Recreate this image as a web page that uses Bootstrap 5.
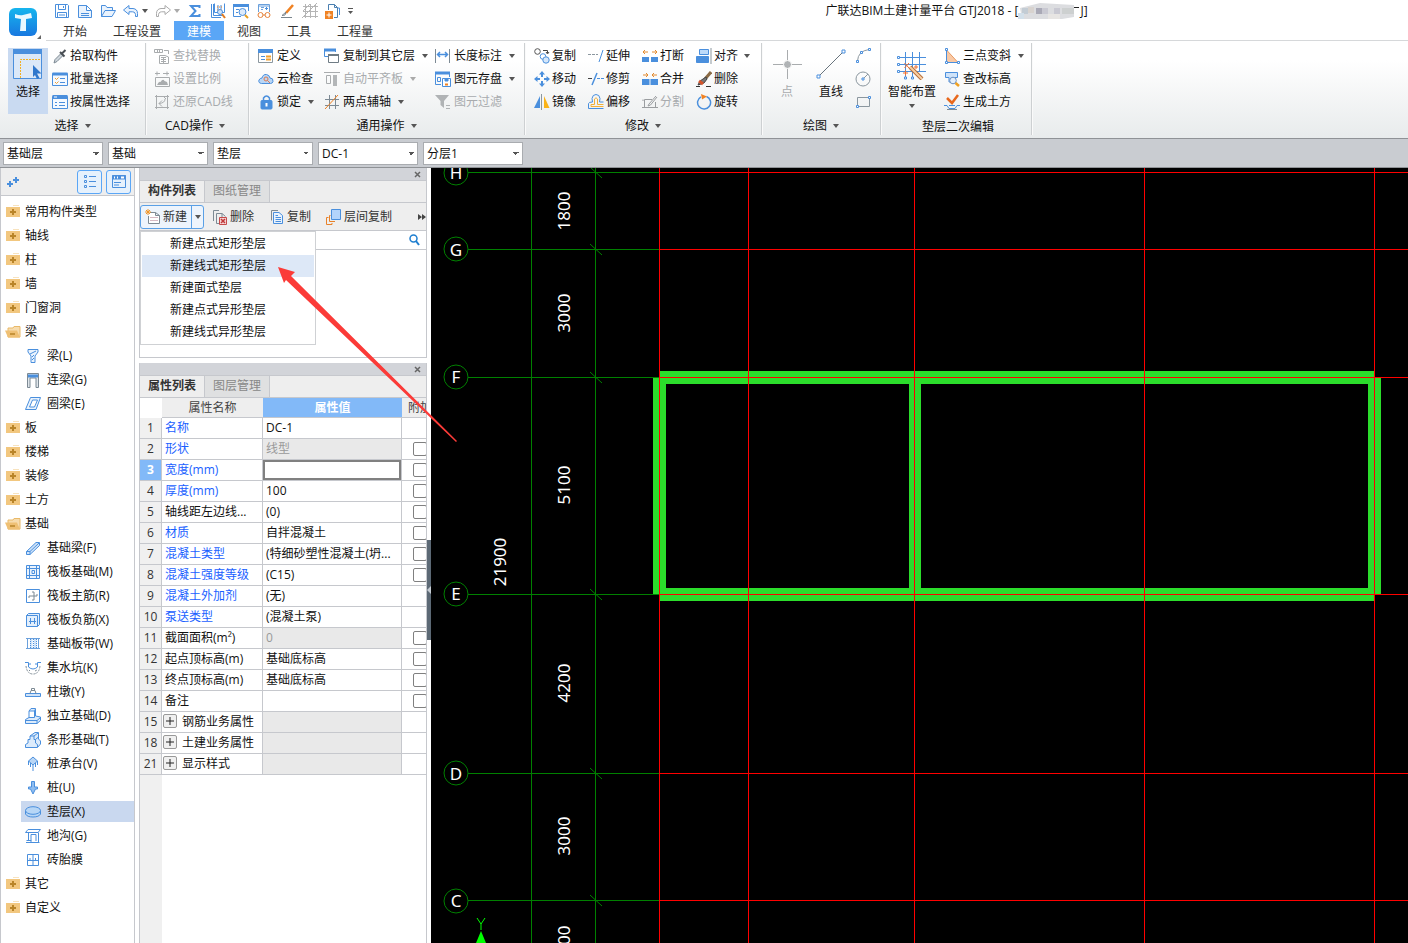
<!DOCTYPE html>
<html lang="zh-CN">
<head>
<meta charset="utf-8">
<meta name="viewport" content="width=device-width, initial-scale=1">
<title>广联达BIM土建计量平台 GTJ2018</title>
<link href="https://cdn.jsdelivr.net/npm/bootstrap@5.3.0/dist/css/bootstrap.min.css" rel="stylesheet">
<style>
:root{--bl:#4a8fdd;--gr:#8b979f;--or:#f08223;--ln:#c6c8cd}
body{font:12px/16px "Open Sans","Noto Sans CJK SC",sans-serif;color:#111;background:#fff;overflow:hidden}
.btn{--bs-btn-font-size:12px;--bs-btn-line-height:16px;--bs-btn-padding-x:0;--bs-btn-padding-y:0;--bs-btn-border-width:0;--bs-btn-border-radius:0;--bs-btn-color:#111;--bs-btn-disabled-color:#a8abae;--bs-btn-disabled-opacity:1;white-space:nowrap}
.btn svg,.ic{display:block;flex:none}
.ic{width:16px;height:16px}
.ic-lg{width:32px;height:32px}
.caret{width:0;height:0;flex:none;border:3px solid transparent;border-top:4px solid #555;border-bottom:0}
.caret.pale{border-top-color:#aaa}
.apps{width:46px;border-right:1px solid #ddd}
.qat{height:21px;gap:7px;padding-left:8px}
.qat .btn.d-flex{gap:3px}
.app-title{padding-left:152px}
.menu-tabs{--bs-nav-link-font-size:12px;padding-left:4px;border-bottom:1px solid #d6d8da}
.menu-tabs .nav-link{padding:3px 13px 0;color:#333;border-radius:0}
.menu-tabs .nav-link.active{background:#5aa6f6;color:#fff}
.ribbon{background:linear-gradient(#fff 20%,#e8ebec);border-bottom:1px solid #8f9296;padding:2px 0 3px}
.rgroup{border-right:1px solid #cdd0d2;box-shadow:1px 0 #fafafa;height:92px}
.rgroup>.cmds{height:73px;padding-top:1px}
.rlabel{height:19px;gap:6px}
.pad-9{padding-left:9px}
.cmds .grid3{display:grid;grid-auto-flow:column;grid-template-rows:repeat(3,23px);align-items:center;justify-items:start}
.cmd{display:flex;align-items:center;gap:2px}
.cmd .caret,.w3 .caret{margin-left:4px}
.w3 .cmd{gap:3px}
.cols-3{grid-template-columns:66px 111px 88px}
.cols-4{grid-template-columns:repeat(4,54px)}
.big{display:flex;flex-direction:column;align-items:center}
.big.sel{background:#c9daf1;width:40px;height:66px}
.filterbar{background:#c9ccd1;border-bottom:1px solid #8f9296;padding:3px 3px 2px;gap:5px}
.filterbar .form-select{width:100px;height:23px;border:1px solid #a9acb0;border-radius:0;padding:0 16px 0 3px;font-size:12px;line-height:16px;color:#111;background-color:#fff;background-image:linear-gradient(45deg,transparent 50%,#555 50%),linear-gradient(-45deg,transparent 50%,#555 50%);background-size:3px 3px,3px 3px;background-position:right 6px center,right 3px center}
.workspace{min-height:0}
.sidebar{width:135px;border:1px solid var(--ln);border-width:0 1px}
.sidehead{height:28px;background:#eee;border-bottom:1px solid var(--ln);padding:0 3px 0 5px}
.sidehead .tog{width:25px;height:24px;border:1px solid #5aa6f6;border-radius:3px;background:#e6f1fc;display:flex;align-items:center;justify-content:center}
.tree{padding-top:4px;margin:0;list-style:none}
.tree a{display:flex;align-items:center;height:24px;gap:4px;padding-left:4px;color:#111;text-decoration:none}
.tree .kid a{margin-left:20px;gap:6px}
.tree .cur a{background:#c9d8ef;height:21px;margin-top:1px;margin-bottom:2px}
.docks{width:288px;margin-left:4px}
.dock{border:1px solid var(--ln);border-width:0 1px 1px}
.dockbar{height:12px;background:#d2d4d9;padding-right:5px}
.dock-tabs{background:#eee;border:1px solid var(--ln);border-width:1px 0;height:23px;--bs-nav-link-font-size:12px}
.dock-tabs .nav-link{padding:2px 8px;color:#888;background:#dfe0e1;border-right:1px solid var(--ln);border-radius:0}
.dock-tabs .nav-link.active{font-weight:bold;color:#333;background:#eee}
.tools{height:27px;background:#eee;gap:15px}
.tools .btn{--bs-btn-color:#333}
.newbtn{border:1px solid #5aa0e6;border-radius:3px;background:#edf4fc;height:24px;width:64px;margin-right:-7px}
.newbtn .drop{border-left:1px solid #5aa0e6;width:12px;display:flex;align-items:center;justify-content:center}
.search{height:20px;border:1px solid var(--ln);border-width:1px 0;padding-right:6px}
.search input{border:0;outline:0;min-width:0}
.newmenu{--bs-dropdown-font-size:12px;position:absolute;top:28px;left:0;width:176px;padding:1px;border:1px solid #cfd1d4;border-radius:0}
.newmenu .dropdown-item{padding:2px 0 2px 28px;height:22px;line-height:18px;color:#111}
.newmenu .dropdown-item.on{background:#dde8f7}
.blank{height:107px}
.props{margin-top:5px;border-bottom:0}
.sheet{background:linear-gradient(90deg,#f0f0f0 22px,#fff 22px);overflow:hidden}
.sheet table{table-layout:fixed;width:298px;border-collapse:separate;border-spacing:0}
.sheet th,.sheet td{height:21px;line-height:16px;padding:2px 3px;border:solid var(--ln);border-width:0 1px 1px 0;font-weight:normal;white-space:nowrap;overflow:hidden;background:#fff}
.sheet thead th{height:20px;padding:2px 0 1px;background:#eee;text-align:center;color:#444;border-right:0}
.sheet thead th.v{background:#82b9f8;color:#fff;font-weight:bold}
.sheet thead th.k{background:#fff;border-bottom-color:#fff}
.sheet tbody th{background:#f0f0f0;text-align:center;padding:2px 0;color:#333}
.sheet tbody th.on{background:#82b9f8;color:#fff;font-weight:bold}
.sheet .bl{color:#1a5fff}
.sheet td.ro{background:#e9e9e9;color:#999}
.sheet td.c{text-align:center;padding:3px 0}
.sheet td.ed{padding:0}
.sheet td.ed input{display:block;width:100%;height:20px;border:2px solid #808080;outline:0}
.sheet input[type=checkbox]{appearance:none;width:14px;height:14px;border:1px solid #808080;border-radius:2px;margin:0 auto;display:block;background:#fff}
.plus{width:14px;height:14px;border:1px solid #999;border-radius:2px;background:#f0f0f0;padding:0;display:inline-flex;align-items:center;justify-content:center;margin:0 5px 0 -2px;vertical-align:1px}
.split{width:4px;background:#fff}
.split button{margin-top:372px;width:4px;height:100px;background:#5c6975;border:0;padding:0;display:block}
.cad{background:#000;overflow:hidden}
.cad text{font-family:"Noto Sans",sans-serif;font-size:17px;fill:#fff;text-anchor:middle}
.pointer{position:absolute;left:139px;top:98px;pointer-events:none;z-index:1100}
symbol,.art{fill:none;stroke:var(--bl);stroke-width:1}
</style>
</head>
<body class="min-vh-100 d-flex flex-column">

<svg width="0" height="0" class="position-absolute">
<symbol id="save" viewBox="0 0 16 16"><path d="M1.500 1.500H13.500L14.500 2.500V14.500H1.500ZM4.500 1.500V6.500H11.500V1.500M3.500 14.500V9.500H12.500V14.500M9.500 3V5M5 12H11"/></symbol>
<symbol id="doc" viewBox="0 0 16 16"><path d="M1.500 2.500H9.500L14.500 7.500V14.500H1.500ZM9.500 2.500V7.500H14.500M4 10.500H12M4 12.500H12" fill="#eaf3fd"/></symbol>
<symbol id="open" viewBox="0 0 16 16"><path d="M1.500 13.500V2.500H5.500L7 4.500H12.500V7.500M1.500 13.500L5 7.500H15.500L12 13.500Z" fill="#eaf3fd"/></symbol>
<symbol id="undo" viewBox="0 0 16 16"><path d="M.5 7L6 2.500V5.500H10Q14.500 6 14.500 10.500V13.500H12.500Q13 9 9.500 8.800H6V11.500Z" fill="#eaf3fd"/></symbol>
<symbol id="redo" viewBox="0 0 16 16"><path d="M15.500 7L10 2.500V5.500H6Q1.500 6 1.500 10.500V13.500H3.500Q3 9 6.500 8.800H10V11.500Z" stroke="#aaa"/></symbol>
<symbol id="sum" viewBox="0 0 16 16"><path d="M12.500 5V3H4L8.500 8L4 13H12.500V11" stroke-width="2"/></symbol>
<symbol id="meas" viewBox="0 0 16 16"><path d="M1.500 1V14.500H11M3.500 1V12.500H14M4.500 .5V9.500H14.500V.5M8 2V7M11 2V6"/><path d="M7 4H13M7 7H12" stroke="#f08223" stroke-dasharray="1 1"/><circle cx="10" cy="9" r="2.500" fill="#cfe4fb"/><path d="M12 11L15 15" stroke="#e07a20" stroke-width="2"/></symbol>
<symbol id="find" viewBox="0 0 16 16"><path d="M.5 2.500H15.500M.5 13.500V2.500M.5 13.500H8M15.500 2.500V8M3 6.500H6M3 9.500H5"/><path d="M0 2.500H16" stroke-width="3"/><circle cx="9.500" cy="9" r="3.500" fill="#dcebfb"/><path d="M12 12L15 15" stroke="#e8a020" stroke-width="2"/></symbol>
<symbol id="view" viewBox="0 0 16 16"><path d="M2.500 9V1.500H13.500V9M5 4.500H8M5 6.500H7M2 3H14" stroke="#6aa0dc"/><path d="M9 5.500H12M10.500 4V7" stroke="#4a8fdd"/><circle cx="4.500" cy="12" r="2.500" stroke="#e5823a"/><circle cx="11.500" cy="12" r="2.500" stroke="#e5823a"/><path d="M7 12H9" stroke="#e5823a"/></symbol>
<symbol id="pen" viewBox="0 0 16 16"><path d="M14 2L7 10" stroke="#f08223" stroke-width="2.500"/><path d="M7 9L3 12.500L6 12ZM2 14.500H13" stroke="#7a858d"/></symbol>
<symbol id="mesh" viewBox="0 0 16 16"><path d="M3.500 1V15M8.500 1V15M13.500 1V15M1 3.500H16M1 8.500H16M1 13.500H16M0 15L15 0M1 8L8 1" stroke="#b5b5b5"/></symbol>
<symbol id="addc" viewBox="0 0 16 16"><path d="M3.500 7V1.500H9.500L12.500 4.500V14.500H9M9.500 1.500V4.500H12.500" stroke="#4a7fb0"/><path d="M13 5H14.500V12" stroke="#4a8fdd"/><rect x="0" y="8" width="8" height="8" fill="#f08223" stroke="none"/><path d="M1.500 12H6.500M4 9.500V14.500" stroke="#fff"/></symbol>
<symbol id="pick" viewBox="0 0 16 16"><path d="M2 15L3 11.500L9 5.500L11 7.500L5 13.500Z" stroke="#7d8a94" fill="#cfd6dc"/><path d="M8 4L12.500 8.500M10 5.500L13.500 2" stroke="#4a4f55" stroke-width="2"/></symbol>
<symbol id="batch" viewBox="0 0 16 16"><path d="M.5 2.500H15.500V14.500H.5Z" fill="#f4f9ff"/><path d="M.5 3H15.500" stroke-width="3"/><path d="M8 7.500H13M8 11.500H13"/><path d="M3 7L4.500 8.500L6.500 6.500M3 11L4.500 12.500L6.500 10.500" stroke="#f0a030"/></symbol>
<symbol id="prop" viewBox="0 0 16 16"><path d="M.5 2.500H15.500V14.500H.5Z" fill="#f4f9ff"/><path d="M.5 3H15.500" stroke-width="4"/><path d="M2 3H5" stroke="#fff"/><path d="M3 8.500H5M7 8.500H13M3 11.500H5M7 11.500H13"/></symbol>
<symbol id="rep" viewBox="0 0 16 16"><path d="M.5 1.500H8.500V4.500H.5ZM3.500 2V4M5.500 2V4M10 2.500H14.500V6M5.500 15.500V7.500H11L14.500 9V15.500ZM7 9.500H12M7 11.500H12M7 13.500H12M9.500 9V15" stroke="#a9acae"/></symbol>
<symbol id="scale" viewBox="0 0 16 16"><path d="M1 2.500H6M9 2.500H15M3 .5V4.500M13 .5V4.500M1.500 6.500H15.500V15.500H1.500Z" stroke="#a9acae"/><path d="M3 14Q5 10 6.500 11Q9 7 10.500 10L13 11L14 14Z" fill="#a9acae" stroke="none"/></symbol>
<symbol id="rest" viewBox="0 0 16 16"><path d="M1 2.500H15M2.500 1V15M13.500 1V15M1 13.500H15M11 5Q11 9 5 9.500M8 6.500L5 9.500L8 12.500M10 3L12 5" stroke="#a9acae"/></symbol>
<symbol id="def" viewBox="0 0 16 16"><path d="M.5 2V14.500H14.500V2" stroke="#8b979f" fill="#fff"/><path d="M0 3H15" stroke-width="4"/><path d="M3 8.500H7M3 11.500H7"/><path d="M8 8.500H13M8 11.500H13" stroke="#f0a030" stroke-width="2"/></symbol>
<symbol id="cloud" viewBox="0 0 16 16"><path d="M3.500 12.500Q0 12 1 9Q2 7 4 7Q5 3 8.500 3.500Q11.500 4 12 7Q15.500 7 15 10.500Q14.500 12.500 12.500 12.500Z" fill="#b9d6f5"/><circle cx="8" cy="8" r="2" stroke="#e07a50"/><path d="M9.500 9.500L12 12" stroke="#e07a50"/></symbol>
<symbol id="lock" viewBox="0 0 16 16"><path d="M5.500 7V4Q8.500 0 11.500 4V7" stroke-width="1.500"/><rect x="3" y="6.500" width="11" height="8.500" rx="1" fill="#4a8fdd"/><path d="M8.500 9V12.500" stroke="#fff" stroke-width="2"/></symbol>
<symbol id="cpf" viewBox="0 0 16 16"><path d="M4.500 8.500H.5V1.500H11.500V4"/><path d="M0 2H12" stroke-width="3"/><path d="M4.500 6.500H14.500V14.500H4.500Z" stroke="#6e7b84" fill="#fff"/><path d="M4 7H15" stroke="#6e7b84" stroke-width="2"/></symbol>
<symbol id="flat" viewBox="0 0 16 16"><path d="M0 1.500H16M2.500 4.500H6.500V12.500H2.500Z" stroke="#a9acae"/><rect x="9" y="4" width="4" height="11" fill="#b3b6b8" stroke="none"/></symbol>
<symbol id="axis" viewBox="0 0 16 16"><path d="M5.500 1V15M11.500 1V15M1 5.500H15M1 11.500H15" stroke="#7d8a94"/><path d="M1 15L14 1" stroke="#f08223"/></symbol>
<symbol id="len" viewBox="0 0 16 16"><path d="M.5 1V15M14.500 1V15" stroke="#7d8a94"/><path d="M3 6.500H13M5 4L2.500 6.500L5 9M10 4L12.500 6.500L10 9" stroke-width="1.500"/></symbol>
<symbol id="store" viewBox="0 0 16 16"><path d="M.5 13.500V1.500H14.500V6M.5 13.500H6M2.500 6.500H5.500V10.500H2.500Z"/><path d="M0 2H15" stroke-width="3"/><path d="M7.500 7.500H15.500V15.500H7.500Z" fill="#fff"/><path d="M10 8H13V10H10Z" fill="#4a8fdd"/><path d="M10 13.500H13" stroke="#f08223" stroke-width="2"/></symbol>
<symbol id="filt" viewBox="0 0 16 16"><path d="M0 1H14L9 7V14L5.500 11V7Z" fill="#b0b3b5" stroke="none"/><path d="M11 11.500H15M11 14.500H15" stroke="#b0b3b5"/></symbol>
<symbol id="copy" viewBox="0 0 16 16"><circle cx="3.500" cy="3.500" r="2.800" stroke="#555"/><path d="M9 2.500H13.500V5M12 4L13.500 6L15 4" stroke="#444"/><circle cx="9" cy="8.500" r="2.800"/><circle cx="12" cy="12" r="3.200" fill="#d5e7fa"/></symbol>
<symbol id="move" viewBox="0 0 16 16"><path d="M8 0L11 3.500H9V6H7V3.500H5ZM8 16L11 12.500H9V10H7V12.500H5ZM0 8L3.500 5V7H6V9H3.500V11ZM16 8L12.500 5V7H10V9H12.500V11Z" fill="#4a8fdd" stroke="none"/></symbol>
<symbol id="mirror" viewBox="0 0 16 16"><path d="M6 2V14H0Z" fill="#4a8fdd" stroke="none"/><path d="M10 2V14H15.500Z" fill="#fab319" stroke="none"/><path d="M7.500 0V16" stroke="#8b979f"/></symbol>
<symbol id="ext" viewBox="0 0 16 16"><path d="M0 6.500H10" stroke="#8b979f" stroke-dasharray="3 1"/><path d="M15 2L11 14"/></symbol>
<symbol id="trim" viewBox="0 0 16 16"><path d="M0 7.500H4" stroke="#444"/><path d="M9 7.500H16" stroke-dasharray="3 1"/><path d="M9 2L4 14" stroke-width="1.500"/></symbol>
<symbol id="offs" viewBox="0 0 16 16"><path d="M.5 14.500V9.500Q1 8 4.500 8L4 4.500Q4.500 .5 8 .5Q11.500 .5 12 4.500L11.500 8H15.500M15.500 14.500H.5"/><path d="M3 12.500V10.500H6.500V5Q8 2.500 9.500 5V10.500H15.500M3 12.500H15.500" stroke="#f2b13a"/></symbol>
<symbol id="brk" viewBox="0 0 16 16"><path d="M0 9H7V14H0ZM9 9H16V14H9Z" fill="#4a8fdd" stroke="none"/><path d="M1 4H6M10 4H15M3 2L1 4L3 6M13 2L15 4L13 6" stroke="#e38a2e"/></symbol>
<symbol id="join" viewBox="0 0 16 16"><path d="M0 8H7.500V14H0ZM8.500 8H16V14H8.500Z" fill="#4a8fdd" stroke="none"/><path d="M1 4H6M10 4H15M4 2L6 4L4 6M12 2L10 4L12 6" stroke="#e38a2e"/></symbol>
<symbol id="cut" viewBox="0 0 16 16"><path d="M10 5.500H2.500V13.500H13.500V8M1 7V5.500M0 13.500H4M12 13.500H16M7 10L14 2M7 10L6 12L8.500 11L15 3" stroke="#9a9da0"/></symbol>
<symbol id="alig" viewBox="0 0 16 16"><path d="M3.500 1.500H12.500V6.500H3.500Z" fill="#bcdafa"/><path d="M.5 8.500H12.500V14.500H.5Z" fill="#4a8fdd"/><path d="M15 0V16" stroke="#8b979f"/></symbol>
<symbol id="brush" viewBox="0 0 16 16"><path d="M15 1L9 8" stroke="#8a6a45" stroke-width="3"/><path d="M10 6L4 10L2 14L8 12L11 8Z" fill="#777" stroke="#444"/><path d="M3 10L7 13" stroke="#d4532a" stroke-width="3"/><path d="M0 15.500H4M10 15.500H15" stroke="#333"/></symbol>
<symbol id="rot" viewBox="0 0 16 16"><path d="M10.500 2.500A6.500 6.500 0 1 1 5 2.800" stroke-width="1.500"/><path d="M5 0L11 2.500L6 5.500Z" fill="#f08223" stroke="none"/></symbol>
<symbol id="arc" viewBox="0 0 16 16"><path d="M2.500 13Q3 3 14 1.500" stroke="#8b979f"/><path d="M1.500 12.500H3.500V14.500H1.500ZM5.500 3.500H7.500V5.500H5.500ZM13.500 .5H15.500V2.500H13.500Z" fill="#fff"/></symbol>
<symbol id="circ" viewBox="0 0 16 16"><circle cx="8" cy="8" r="7" stroke="#8b979f"/><path d="M8 8L13 3" stroke="#8b979f"/><path d="M7 7H9V9H7Z" fill="#fff"/></symbol>
<symbol id="rect" viewBox="0 0 16 16"><path d="M2.500 3.500H14.500V12.500H2.500Z" stroke="#8b979f"/><path d="M1.500 11.500H3.500V13.500H1.500ZM13.500 2.500H15.500V4.500H13.500Z" fill="#fff"/></symbol>
<symbol id="tri" viewBox="0 0 16 16"><path d="M2.500 2V14.500H14Z" fill="#f9c9a5" stroke="#e89a63"/><path d="M2.500 2V14.500H14"/><path d="M1.500 .5H3.500V2.500H1.500ZM1.500 13.500H3.500V15.500H1.500ZM13.500 13.500H15.500V15.500H13.500Z" fill="#fff"/></symbol>
<symbol id="elev" viewBox="0 0 16 16"><path d="M1.500 1.500H13.500V6.500H11V11H5V6.500H1.500Z" fill="#cfe3f9"/><circle cx="9" cy="9.500" r="3.300" fill="#e3effc" stroke="#6a8fc0"/><path d="M11.500 12L15 15" stroke="#f0a020" stroke-width="2.500"/></symbol>
<symbol id="earth" viewBox="0 0 16 16"><path d="M3 4L8 9L14 1" stroke="#e8681c" stroke-width="2.500"/><path d="M0 11.500H3L5 14.500H11L13 11.500H16M5 11.500H11"/><path d="M3 15.500H13" stroke="#7d8a94"/></symbol>
<symbol id="bsel" viewBox="0 0 32 32"><path d="M1.500 3H29.500V30.500H1.500Z" fill="#dbe8f8"/><path d="M1 3.500H30" stroke-width="5"/><path d="M8.500 30V11.500H29" stroke="#f2b024" stroke-dasharray="2 1"/><path d="M21 17L29.500 25.500H25L27.500 30L25 31L23 27L21 29Z" fill="#2f77cc" stroke="none"/></symbol>
<symbol id="bpt" viewBox="0 0 32 32"><path d="M16.500 2V31M2 16.500H31" stroke="#a9acae"/><circle cx="16.500" cy="16.500" r="4" fill="#b0b3b5" stroke="#fff"/></symbol>
<symbol id="bline" viewBox="0 0 32 32"><path d="M3.500 28.500L28.500 3.500" stroke="#68747d"/><path d="M2 27H5V30H2ZM27 2H30V5H27Z" fill="#fff"/></symbol>
<symbol id="bsmart" viewBox="0 0 32 32"><path d="M9.500 4V30M16.500 4V30M23.500 4V24M2 9.500H30M2 16.500H30M2 23.500H30"/><path d="M1.500 8.500H3.500V10.500H1.500ZM1.500 15.500H3.500V17.500H1.500ZM1.500 22.500H3.500V24.500H1.500ZM8.500 29H10.500V31H8.500ZM15.500 29H17.500V31H15.500Z" fill="#fff"/><path d="M14 19L26 31" stroke="#b8703a" stroke-width="4"/><path d="M14 19L26 31" stroke="#f7cfa4" stroke-width="2"/><path d="M8.500 15L13 20M13 15L8.500 20M18 19H22M20 17V21M7 25H12M9.500 22.500V27.500" stroke="#f07030"/></symbol>
<symbol id="fold" viewBox="0 0 16 16"><path d="M1 3H8V1.500H14V3H15V13H1Z" fill="#f2c77f" stroke="none"/><path d="M7 2.500H15" stroke="#fff"/><path d="M5 8H11M8 5V11" stroke="#b98428" stroke-width="2"/></symbol>
<symbol id="foldo" viewBox="0 0 16 16"><path d="M3 4H8L9 2.500H15V13H3Z" fill="#f7dcae" stroke="#e9b968"/><path d="M0 6.500H12L15 13.500H3Z" fill="#efc074" stroke="none"/><path d="M5 10H10" stroke="#b98428" stroke-width="1.500"/></symbol>
<symbol id="k1" viewBox="0 0 16 16"><path d="M3 1.500H13V4L10 8V14.500H6V8L3 4ZM5 6L11 3M7 9L9 7M7 12L9 10" fill="#eaf3fd"/></symbol>
<symbol id="k2" viewBox="0 0 16 16"><path d="M2.500 15.500V1.500H13.500V15.500H11V6H5V15.500Z" stroke="#7d8a94" fill="#dfe5ea"/><path d="M3 4H13" stroke-width="3"/></symbol>
<symbol id="k3" viewBox="0 0 16 16"><path d="M5.500 1.500H15.500L11 13.500H.5ZM7.500 4H12.500L9.500 11H4.500Z" fill="#eaf3fd" fill-rule="evenodd"/></symbol>
<symbol id="k4" viewBox="0 0 16 16"><path d="M1.500 11.500L11 2.500H14.500V5.500L5 14.500H1.500ZM1.500 11.500H5V14.500M5 11.500L14 3" fill="#cfe3f9"/></symbol>
<symbol id="k5" viewBox="0 0 16 16"><path d="M1.500 1.500H14.500V14.500H1.500ZM1.500 4.500H14.500M1.500 11.500H14.500M4.500 1.500V14.500M11.500 1.500V14.500M7 6.500H9.500V9.500H7Z" fill="#eaf3fd"/></symbol>
<symbol id="k6" viewBox="0 0 16 16"><path d="M1.500 1.500H14.500V14.500H1.500Z"/><path d="M4 10V8H12V6M7 4H9V12H7" stroke="#7d8a94"/></symbol>
<symbol id="k7" viewBox="0 0 16 16"><path d="M1.500 3.500H12.500V14.500H1.500ZM1.500 3.500L3.500 1.500H14.500V12.500L12.500 14.500" fill="#e3effc"/><path d="M4 9.500H11M5.500 6V12M9.500 6V12"/></symbol>
<symbol id="k8" viewBox="0 0 16 16"><path d="M1 2.500H15M1 12.500H15M2.500 2V13M13.500 2V13" stroke="#6aa0dc"/><path d="M5 3H7.500V12H5ZM9 3H11.500V12H9Z" fill="#cfe3f9" stroke="none"/><path d="M5.500 3V12M8.500 3V12M11.500 3V12" stroke-dasharray="1 1"/></symbol>
<symbol id="k9" viewBox="0 0 16 16"><path d="M0 2.500H3.500V7Q8 11 12.500 7V2.500H16M5 3V5M11 3V5"/><path d="M1 6Q2 14 8 14Q14 14 15 6M4 10L5 11M10 11L12 10" stroke="#7d8a94" stroke-dasharray="2 1"/></symbol>
<symbol id="k10" viewBox="0 0 16 16"><path d="M.5 9.500H15.500V12.500H.5Z" fill="#cfe3f9"/><path d="M5 9.500L6 6.500H10L11 9.500M6.500 6.500V4.500H9.500V6.500" stroke="#7d8a94"/></symbol>
<symbol id="k11" viewBox="0 0 16 16"><path d="M.5 11.500L4 9.500V3L6 .5H10.500V8L15.500 9V12.500L12 15.500H.5ZM4 9.500H9.500V3H4M9.500 3L10.500 1M.5 12.500H12V15.500M12 12.500L15 10" fill="#dcebfb"/></symbol>
<symbol id="k12" viewBox="0 0 16 16"><path d="M.5 15.500V12.500L3 11V7.500H5V4L10 .5H13.500V7L15.500 9V12L12.500 15.500ZM5 4H9V7.500H10.500V11L12.500 12.500V15M9 4L13 1M10.500 7.500L13.500 5" fill="#dcebfb"/></symbol>
<symbol id="k13" viewBox="0 0 16 16"><path d="M8 1L12.500 5L8 9L3.500 5ZM3.500 5V9M12.500 5V9M8 9V15M5.500 7V11M10.500 7V11" fill="#b9d6f5"/></symbol>
<symbol id="k14" viewBox="0 0 16 16"><path d="M6.500 1.500H9.500V7H12.500V9H10.500L8 14L5.500 9H3.500V7H6.500Z" fill="#8fbdf0"/></symbol>
<symbol id="k15" viewBox="0 0 16 16"><path d="M.5 6.500V10Q2 13 8 13Q14 13 15.500 10V6.500" fill="#b7d6f6"/><ellipse cx="8" cy="6.500" rx="7.500" ry="3.800" fill="#b7d6f6"/></symbol>
<symbol id="k16" viewBox="0 0 16 16"><path d="M3 1.500H15.500L13 4.500H.5ZM3.500 4.500V13M1 14.500H14.500M6 13V6.500H11V13M13.500 4.500V14M1.500 12.500H6V14"/></symbol>
<symbol id="k17" viewBox="0 0 16 16"><path d="M2.500 2.500H13.500V13.500H2.500ZM8 2.500V13.500M2.500 8.500H13.500M5 6V8M10.500 6V8"/></symbol>
<symbol id="tnew" viewBox="0 0 16 16"><path d="M5 3.500H10.500L14.500 6.500V14.500H3.500V7M10.500 3.500V6.500H14.500" stroke="#7d8a94" fill="#fff"/><path d="M5 8.500H13M5 11.500H13" stroke="#d6b9c4"/><path d="M1 1L5 5M5 1L1 5M3 0V6M0 3H6" stroke="#f0962a"/></symbol>
<symbol id="tdel" viewBox="0 0 16 16"><path d="M1.500 12V1.500H7M4.500 14.500V4.500H10L13.500 7.500M4.500 14.500H7M10 4.500V8" stroke="#7d8a94"/><path d="M7.500 8.500H14.500V15.500H7.500Z" fill="#f6d5d5" stroke="#c54a4a"/><path d="M9 10L13 14M13 10L9 14" stroke="#c03838" stroke-width="1.500"/></symbol>
<symbol id="tcpy" viewBox="0 0 16 16"><path d="M2.500 11.500V1.500H9" stroke="#7d8a94"/><path d="M4.500 3.500H10L13.500 6.500V14.500H4.500Z" fill="#eaf3fd"/><path d="M6.500 6.500H9M6.500 8.500H12M6.500 10.500H12M6.500 12.500H12"/></symbol>
<symbol id="tlay" viewBox="0 0 16 16"><path d="M5.500 .5H14.500V10.500H5.500Z" fill="#b3d4fb"/><path d="M4.500 6.500H3.500V12.500H9M2.500 8.500H.5V15.500H6V14" stroke="#e8822a"/></symbol>
</svg>

<header class="d-flex">
  <button class="btn apps d-flex align-items-end justify-content-center" aria-label="应用菜单">
    <svg width="36" height="34" viewBox="0 0 36 34"><defs><linearGradient id="lg" x2="0" y2="1"><stop stop-color="#16b5ee"/><stop offset="1" stop-color="#1878e0"/></linearGradient></defs><rect x="4" y="1" width="28" height="28" rx="6" fill="url(#lg)"/><path d="M10 7Q15 9 18 8L26 6L27 11L21 12L21 24H15L16 12L10 11Z" fill="#e9f8ff"/><path d="M36 28V32H32Z" fill="#666"/></svg>
  </button>
  <div class="flex-grow-1">
    <div class="d-flex">
      <div class="qat d-flex align-items-center">
        <button class="btn" aria-label="保存"><svg class="ic"><use href="#save"/></svg></button>
        <button class="btn" aria-label="新建工程"><svg class="ic"><use href="#doc"/></svg></button>
        <button class="btn" aria-label="打开"><svg class="ic"><use href="#open"/></svg></button>
        <button class="btn d-flex align-items-center" aria-label="撤销"><svg class="ic"><use href="#undo"/></svg><i class="caret"></i></button>
        <button class="btn d-flex align-items-center" aria-label="恢复"><svg class="ic"><use href="#redo"/></svg><i class="caret pale"></i></button>
        <button class="btn" aria-label="汇总"><svg class="ic"><use href="#sum"/></svg></button>
        <button class="btn" aria-label="查看计算式"><svg class="ic"><use href="#meas"/></svg></button>
        <button class="btn" aria-label="查看工程量"><svg class="ic"><use href="#find"/></svg></button>
        <button class="btn" aria-label="查看报表"><svg class="ic"><use href="#view"/></svg></button>
        <button class="btn" aria-label="标记"><svg class="ic"><use href="#pen"/></svg></button>
        <button class="btn" aria-label="网格"><svg class="ic"><use href="#mesh"/></svg></button>
        <button class="btn" aria-label="添加"><svg class="ic"><use href="#addc"/></svg></button>
        <button class="btn" aria-label="自定义"><svg width="5" height="7"><path d="M0 1.500H5" stroke="#555"/><path d="M0 4H5L2.500 7Z" fill="#555"/></svg></button>
      </div>
      <div class="app-title flex-grow-1 d-flex align-items-center justify-content-center text-nowrap"><span>广联达BIM土建计量平台 GTJ2018 - [</span><svg width="62" height="18" viewBox="0 0 62 18"><path d="M2 6L14 3L22 1L56 3V15L44 17H4Z" fill="#dcdde0"/><path d="M4 6H10V12H4Z" fill="#c3ccd4"/><path d="M0 11H6V17H0Z" fill="#d3e0ea"/><path d="M10 5H16V11H10Z" fill="#d8d3cf"/><path d="M18 6H24V12H18Z" fill="#a9a9b6"/><path d="M24 6H30V12H24ZM36 6H42V12H36Z" fill="#c9c9d2"/><path d="M30 12H42V17H30Z" fill="#e7e5e3"/><path d="M44 6H56V12H44Z" fill="#cdd0d0"/><path d="M56 5.500H61" stroke="#222"/></svg><span>J]</span></div>
    </div>
    <nav class="nav menu-tabs">
      <a class="nav-link" href="#">开始</a><a class="nav-link" href="#">工程设置</a><a class="nav-link active" href="#">建模</a><a class="nav-link" href="#">视图</a><a class="nav-link" href="#">工具</a><a class="nav-link" href="#">工程量</a>
    </nav>
  </div>
</header>

<section class="ribbon d-flex">
  <div class="rgroup" style="width:146px">
    <div class="cmds d-flex ps-2">
      <div class="pt-1 me-1"><button class="btn big sel"><svg class="ic-lg"><use href="#bsel"/></svg><span class="mt-1">选择</span></button></div>
      <div class="grid3">
        <button class="btn cmd"><svg class="ic"><use href="#pick"/></svg>拾取构件</button>
        <button class="btn cmd"><svg class="ic"><use href="#batch"/></svg>批量选择</button>
        <button class="btn cmd"><svg class="ic"><use href="#prop"/></svg>按属性选择</button>
      </div>
    </div>
    <div class="rlabel d-flex align-items-center justify-content-center">选择<i class="caret"></i></div>
  </div>
  <div class="rgroup" style="width:103px">
    <div class="cmds w3 ps-2">
      <div class="grid3">
        <button class="btn cmd" disabled><svg class="ic"><use href="#rep"/></svg>查找替换</button>
        <button class="btn cmd" disabled><svg class="ic"><use href="#scale"/></svg>设置比例</button>
        <button class="btn cmd" disabled><svg class="ic"><use href="#rest"/></svg>还原CAD线</button>
      </div>
    </div>
    <div class="rlabel d-flex align-items-center justify-content-center pe-1">CAD操作<i class="caret"></i></div>
  </div>
  <div class="rgroup" style="width:276px">
    <div class="cmds w3 pad-9">
      <div class="grid3 cols-3">
        <button class="btn cmd"><svg class="ic"><use href="#def"/></svg>定义</button>
        <button class="btn cmd"><svg class="ic"><use href="#cloud"/></svg>云检查</button>
        <button class="btn cmd"><svg class="ic"><use href="#lock"/></svg>锁定<i class="caret"></i></button>
        <button class="btn cmd"><svg class="ic"><use href="#cpf"/></svg>复制到其它层<i class="caret"></i></button>
        <button class="btn cmd" disabled><svg class="ic"><use href="#flat"/></svg>自动平齐板<i class="caret pale"></i></button>
        <button class="btn cmd"><svg class="ic"><use href="#axis"/></svg>两点辅轴<i class="caret"></i></button>
        <button class="btn cmd"><svg class="ic"><use href="#len"/></svg>长度标注<i class="caret"></i></button>
        <button class="btn cmd"><svg class="ic"><use href="#store"/></svg>图元存盘<i class="caret"></i></button>
        <button class="btn cmd" disabled><svg class="ic"><use href="#filt"/></svg>图元过滤</button>
      </div>
    </div>
    <div class="rlabel d-flex align-items-center justify-content-center">通用操作<i class="caret"></i></div>
  </div>
  <div class="rgroup" style="width:237px">
    <div class="cmds pad-9">
      <div class="grid3 cols-4">
        <button class="btn cmd"><svg class="ic"><use href="#copy"/></svg>复制</button>
        <button class="btn cmd"><svg class="ic"><use href="#move"/></svg>移动</button>
        <button class="btn cmd"><svg class="ic"><use href="#mirror"/></svg>镜像</button>
        <button class="btn cmd"><svg class="ic"><use href="#ext"/></svg>延伸</button>
        <button class="btn cmd"><svg class="ic"><use href="#trim"/></svg>修剪</button>
        <button class="btn cmd"><svg class="ic"><use href="#offs"/></svg>偏移</button>
        <button class="btn cmd"><svg class="ic"><use href="#brk"/></svg>打断</button>
        <button class="btn cmd"><svg class="ic"><use href="#join"/></svg>合并</button>
        <button class="btn cmd" disabled><svg class="ic"><use href="#cut"/></svg>分割</button>
        <button class="btn cmd"><svg class="ic"><use href="#alig"/></svg>对齐<i class="caret"></i></button>
        <button class="btn cmd"><svg class="ic"><use href="#brush"/></svg>删除</button>
        <button class="btn cmd"><svg class="ic"><use href="#rot"/></svg>旋转</button>
      </div>
    </div>
    <div class="rlabel d-flex align-items-center justify-content-center">修改<i class="caret"></i></div>
  </div>
  <div class="rgroup" style="width:119px">
    <div class="cmds d-flex pad-9">
      <div class="pt-1"><button class="btn big" disabled><svg class="ic-lg"><use href="#bpt"/></svg><span class="mt-1">点</span></button></div>
      <div class="pt-1 ms-2 ps-1 me-2"><button class="btn big"><svg class="ic-lg"><use href="#bline"/></svg><span class="mt-1">直线</span></button></div>
      <div class="grid3">
        <button class="btn" aria-label="弧"><svg class="ic"><use href="#arc"/></svg></button>
        <button class="btn" aria-label="圆"><svg class="ic"><use href="#circ"/></svg></button>
        <button class="btn" aria-label="矩形"><svg class="ic"><use href="#rect"/></svg></button>
      </div>
    </div>
    <div class="rlabel d-flex align-items-center justify-content-center">绘图<i class="caret"></i></div>
  </div>
  <div class="rgroup" style="width:151px">
    <div class="cmds w3 d-flex" style="padding-left:7px">
      <div class="pt-1 me-1 pe-1"><button class="btn big"><svg class="ic-lg"><use href="#bsmart"/></svg><span class="mt-1">智能布置</span><i class="caret m-0 mt-1"></i></button></div>
      <div class="grid3">
        <button class="btn cmd"><svg class="ic"><use href="#tri"/></svg>三点变斜<i class="caret"></i></button>
        <button class="btn cmd"><svg class="ic"><use href="#elev"/></svg>查改标高</button>
        <button class="btn cmd"><svg class="ic"><use href="#earth"/></svg>生成土方</button>
      </div>
    </div>
    <div class="rlabel d-flex align-items-end justify-content-center ps-1">垫层二次编辑</div>
  </div>
</section>

<div class="filterbar d-flex">
  <select class="form-select" aria-label="楼层"><option>基础层</option></select>
  <select class="form-select" aria-label="构件大类"><option>基础</option></select>
  <select class="form-select" aria-label="构件类型"><option>垫层</option></select>
  <select class="form-select" aria-label="构件"><option>DC-1</option></select>
  <select class="form-select" aria-label="分层"><option>分层1</option></select>
</div>

<main class="workspace d-flex flex-grow-1 position-relative">
  <aside class="sidebar flex-shrink-0">
    <div class="sidehead d-flex align-items-center">
      <svg width="14" height="14" class="me-auto"><path d="M1 9H7M4 6V12M7 5H13M10 2V8" stroke="#4a8fdd" stroke-width="2"/></svg>
      <button class="btn tog me-1" aria-label="列表"><svg class="ic art" viewBox="0 0 16 16"><path d="M2.500 1.500H4.500V3.500H2.500ZM2.500 6.500H4.500V8.500H2.500ZM2.500 11.500H4.500V13.500H2.500ZM7 2.500H14M7 7.500H14M7 12.500H14"/></svg></button>
      <button class="btn tog" aria-label="窗口"><svg class="ic art" viewBox="0 0 16 16"><path d="M1.500 1.500H14.500V13.500H1.500Z"/><path d="M1 3.500H15" stroke-width="4"/><path d="M3 3.500H4M6 3.500H7M10 3.500H13" stroke="#fff" stroke-width="2"/><path d="M3 8.500H10M3 11H8"/></svg></button>
    </div>
    <ul class="tree ps-0">
      <li><a href="#"><svg class="ic"><use href="#fold"/></svg>常用构件类型</a></li>
      <li><a href="#"><svg class="ic"><use href="#fold"/></svg>轴线</a></li>
      <li><a href="#"><svg class="ic"><use href="#fold"/></svg>柱</a></li>
      <li><a href="#"><svg class="ic"><use href="#fold"/></svg>墙</a></li>
      <li><a href="#"><svg class="ic"><use href="#fold"/></svg>门窗洞</a></li>
      <li><a href="#"><svg class="ic"><use href="#foldo"/></svg>梁</a></li>
      <li class="kid"><a href="#"><svg class="ic"><use href="#k1"/></svg>梁(L)</a></li>
      <li class="kid"><a href="#"><svg class="ic"><use href="#k2"/></svg>连梁(G)</a></li>
      <li class="kid"><a href="#"><svg class="ic"><use href="#k3"/></svg>圈梁(E)</a></li>
      <li><a href="#"><svg class="ic"><use href="#fold"/></svg>板</a></li>
      <li><a href="#"><svg class="ic"><use href="#fold"/></svg>楼梯</a></li>
      <li><a href="#"><svg class="ic"><use href="#fold"/></svg>装修</a></li>
      <li><a href="#"><svg class="ic"><use href="#fold"/></svg>土方</a></li>
      <li><a href="#"><svg class="ic"><use href="#foldo"/></svg>基础</a></li>
      <li class="kid"><a href="#"><svg class="ic"><use href="#k4"/></svg>基础梁(F)</a></li>
      <li class="kid"><a href="#"><svg class="ic"><use href="#k5"/></svg>筏板基础(M)</a></li>
      <li class="kid"><a href="#"><svg class="ic"><use href="#k6"/></svg>筏板主筋(R)</a></li>
      <li class="kid"><a href="#"><svg class="ic"><use href="#k7"/></svg>筏板负筋(X)</a></li>
      <li class="kid"><a href="#"><svg class="ic"><use href="#k8"/></svg>基础板带(W)</a></li>
      <li class="kid"><a href="#"><svg class="ic"><use href="#k9"/></svg>集水坑(K)</a></li>
      <li class="kid"><a href="#"><svg class="ic"><use href="#k10"/></svg>柱墩(Y)</a></li>
      <li class="kid"><a href="#"><svg class="ic"><use href="#k11"/></svg>独立基础(D)</a></li>
      <li class="kid"><a href="#"><svg class="ic"><use href="#k12"/></svg>条形基础(T)</a></li>
      <li class="kid"><a href="#"><svg class="ic"><use href="#k13"/></svg>桩承台(V)</a></li>
      <li class="kid"><a href="#"><svg class="ic"><use href="#k14"/></svg>桩(U)</a></li>
      <li class="kid cur d-flow-root"><a href="#"><svg class="ic"><use href="#k15"/></svg>垫层(X)</a></li>
      <li class="kid"><a href="#"><svg class="ic"><use href="#k16"/></svg>地沟(G)</a></li>
      <li class="kid"><a href="#"><svg class="ic"><use href="#k17"/></svg>砖胎膜</a></li>
      <li><a href="#"><svg class="ic"><use href="#fold"/></svg>其它</a></li>
      <li><a href="#"><svg class="ic"><use href="#fold"/></svg>自定义</a></li>
    </ul>
  </aside>

  <div class="docks flex-shrink-0 d-flex flex-column">
    <section class="dock">
      <div class="dockbar d-flex align-items-center justify-content-end"><button class="btn" aria-label="关闭"><svg width="7" height="7"><path d="M1 1L6 6M6 1L1 6" stroke="#666" stroke-width="1.500"/></svg></button></div>
      <nav class="nav dock-tabs"><a class="nav-link active" href="#">构件列表</a><a class="nav-link" href="#">图纸管理</a></nav>
      <div class="tools d-flex align-items-center position-relative">
        <div class="newbtn d-flex">
          <button class="btn cmd flex-grow-1 ps-1"><svg class="ic"><use href="#tnew"/></svg>新建</button>
          <button class="btn drop" aria-label="新建选项" aria-expanded="true"><i class="caret"></i></button>
        </div>
        <button class="btn cmd"><svg class="ic"><use href="#tdel"/></svg>删除</button>
        <button class="btn cmd"><svg class="ic"><use href="#tcpy"/></svg>复制</button>
        <button class="btn cmd"><svg class="ic"><use href="#tlay"/></svg>层间复制</button>
        <button class="btn ms-auto" aria-label="更多"><svg width="8" height="6"><path d="M0 0L4 3L0 6ZM4 0L8 3L4 6Z" fill="#444"/></svg></button>
        <div class="dropdown-menu newmenu show">
          <a class="dropdown-item" href="#">新建点式矩形垫层</a>
          <a class="dropdown-item on" href="#">新建线式矩形垫层</a>
          <a class="dropdown-item" href="#">新建面式垫层</a>
          <a class="dropdown-item" href="#">新建点式异形垫层</a>
          <a class="dropdown-item" href="#">新建线式异形垫层</a>
        </div>
      </div>
      <div class="search d-flex align-items-center"><input type="text" class="flex-grow-1" aria-label="搜索构件"><svg width="11" height="12"><circle cx="4.500" cy="4.500" r="3.500" fill="none" stroke="#1f7fd0" stroke-width="1.500"/><path d="M7 7L10 11" stroke="#1f7fd0" stroke-width="2"/></svg></div>
      <div class="blank"></div>
    </section>

    <section class="dock props flex-grow-1 d-flex flex-column">
      <div class="dockbar d-flex align-items-center justify-content-end"><button class="btn" aria-label="关闭"><svg width="7" height="7"><path d="M1 1L6 6M6 1L1 6" stroke="#666" stroke-width="1.500"/></svg></button></div>
      <nav class="nav dock-tabs"><a class="nav-link active" href="#">属性列表</a><a class="nav-link" href="#">图层管理</a></nav>
      <div class="sheet flex-grow-1">
        <table>
          <colgroup><col style="width:22px"><col style="width:101px"><col style="width:139px"><col style="width:36px"></colgroup>
          <thead><tr><th class="k"></th><th>属性名称</th><th class="v">属性值</th><th>附加</th></tr></thead>
          <tbody>
            <tr><th>1</th><td class="bl">名称</td><td>DC-1</td><td></td></tr>
            <tr><th>2</th><td class="bl">形状</td><td class="ro">线型</td><td class="c"><input type="checkbox" aria-label="附加 形状"></td></tr>
            <tr><th class="on">3</th><td class="bl">宽度(mm)</td><td class="ed"><input type="text" aria-label="宽度"></td><td class="c"><input type="checkbox" aria-label="附加 宽度"></td></tr>
            <tr><th>4</th><td class="bl">厚度(mm)</td><td>100</td><td class="c"><input type="checkbox" aria-label="附加 厚度"></td></tr>
            <tr><th>5</th><td>轴线距左边线...</td><td>(0)</td><td class="c"><input type="checkbox" aria-label="附加 轴线距左边线"></td></tr>
            <tr><th>6</th><td class="bl">材质</td><td>自拌混凝土</td><td class="c"><input type="checkbox" aria-label="附加 材质"></td></tr>
            <tr><th>7</th><td class="bl">混凝土类型</td><td>(特细砂塑性混凝土(坍...</td><td class="c"><input type="checkbox" aria-label="附加 混凝土类型"></td></tr>
            <tr><th>8</th><td class="bl">混凝土强度等级</td><td>(C15)</td><td class="c"><input type="checkbox" aria-label="附加 混凝土强度等级"></td></tr>
            <tr><th>9</th><td class="bl">混凝土外加剂</td><td>(无)</td><td></td></tr>
            <tr><th>10</th><td class="bl">泵送类型</td><td>(混凝土泵)</td><td></td></tr>
            <tr><th>11</th><td>截面面积(m²)</td><td class="ro">0</td><td class="c"><input type="checkbox" aria-label="附加 截面面积"></td></tr>
            <tr><th>12</th><td>起点顶标高(m)</td><td>基础底标高</td><td class="c"><input type="checkbox" aria-label="附加 起点顶标高"></td></tr>
            <tr><th>13</th><td>终点顶标高(m)</td><td>基础底标高</td><td class="c"><input type="checkbox" aria-label="附加 终点顶标高"></td></tr>
            <tr><th>14</th><td>备注</td><td></td><td class="c"><input type="checkbox" aria-label="附加 备注"></td></tr>
            <tr><th>15</th><td><button class="plus" aria-label="展开"><svg width="8" height="8"><path d="M0 4H8M4 0V8" stroke="#222"/></svg></button>钢筋业务属性</td><td class="ro"></td><td></td></tr>
            <tr><th>18</th><td><button class="plus" aria-label="展开"><svg width="8" height="8"><path d="M0 4H8M4 0V8" stroke="#222"/></svg></button>土建业务属性</td><td class="ro"></td><td></td></tr>
            <tr><th>21</th><td><button class="plus" aria-label="展开"><svg width="8" height="8"><path d="M0 4H8M4 0V8" stroke="#222"/></svg></button>显示样式</td><td class="ro"></td><td></td></tr>
          </tbody>
        </table>
      </div>
    </section>
  </div>

  <div class="split flex-shrink-0"><button aria-label="收起面板"><svg class="d-block" width="4" height="8"><path d="M4 0V8L0 4Z" fill="#c5ccd3"/></svg></button></div>

  <div class="cad flex-grow-1 position-relative">
    <svg class="position-absolute top-0 start-0 w-100 h-100">
      <g fill="#2bdd2b">
        <path d="M229 203H943V216H229ZM229 420H943V433H229ZM222 210H235V426H222ZM478 210H490V426H478ZM937 210H950V426H937Z"/>
      </g>
      <g stroke="#008000" fill="none">
        <path d="M37 4.500H228M37 81.500H228M37 209.500H228M37 426.500H228M37 605.500H228M37 732.500H228M100.500 0V3000M164.500 0V3000"/>
        <path d="M159 -1L171 10M159 76L171 87M159 204L171 215M159 421L171 432M159 600L171 611M159 727L171 738"/>
        <circle cx="25" cy="5" r="12"/><circle cx="25" cy="81" r="12"/><circle cx="25" cy="209" r="12"/><circle cx="25" cy="426" r="12"/><circle cx="25" cy="605" r="12"/><circle cx="25" cy="733" r="12"/>
      </g>
      <path stroke="#f00" d="M228 4.500H4000M228 81.500H4000M228 209.500H4000M228 426.500H4000M228 605.500H4000M228 732.500H4000M228.500 0V3000M317.500 0V3000M483.500 0V3000M713.500 0V3000M943.500 0V3000"/>
      <text x="25" y="11">H</text><text x="25" y="88">G</text><text x="25" y="215">F</text><text x="25" y="432">E</text><text x="25" y="612">D</text><text x="25" y="739">C</text>
      <text transform="translate(139 43) rotate(-90)">1800</text>
      <text transform="translate(139 145) rotate(-90)">3000</text>
      <text transform="translate(139 317) rotate(-90)">5100</text>
      <text transform="translate(75 394) rotate(-90)">21900</text>
      <text transform="translate(139 515) rotate(-90)">4200</text>
      <text transform="translate(139 668) rotate(-90)">3000</text>
      <text transform="translate(139 777) rotate(-90)">3300</text>
      <path d="M46 750L50 756L54 750M50 756V762" fill="none" stroke="#0f0"/>
      <path d="M50 763L55 775H45Z" fill="#0f0"/>
    </svg>
  </div>

  <svg class="pointer" width="320" height="178"><path d="M139 1L156 6L152 10L318 175L317 176L147 14L145 17Z" fill="#fb3b38"/></svg>
</main>
<script src="https://cdn.jsdelivr.net/npm/bootstrap@5.3.0/dist/js/bootstrap.bundle.min.js"></script>
</body>
</html>
